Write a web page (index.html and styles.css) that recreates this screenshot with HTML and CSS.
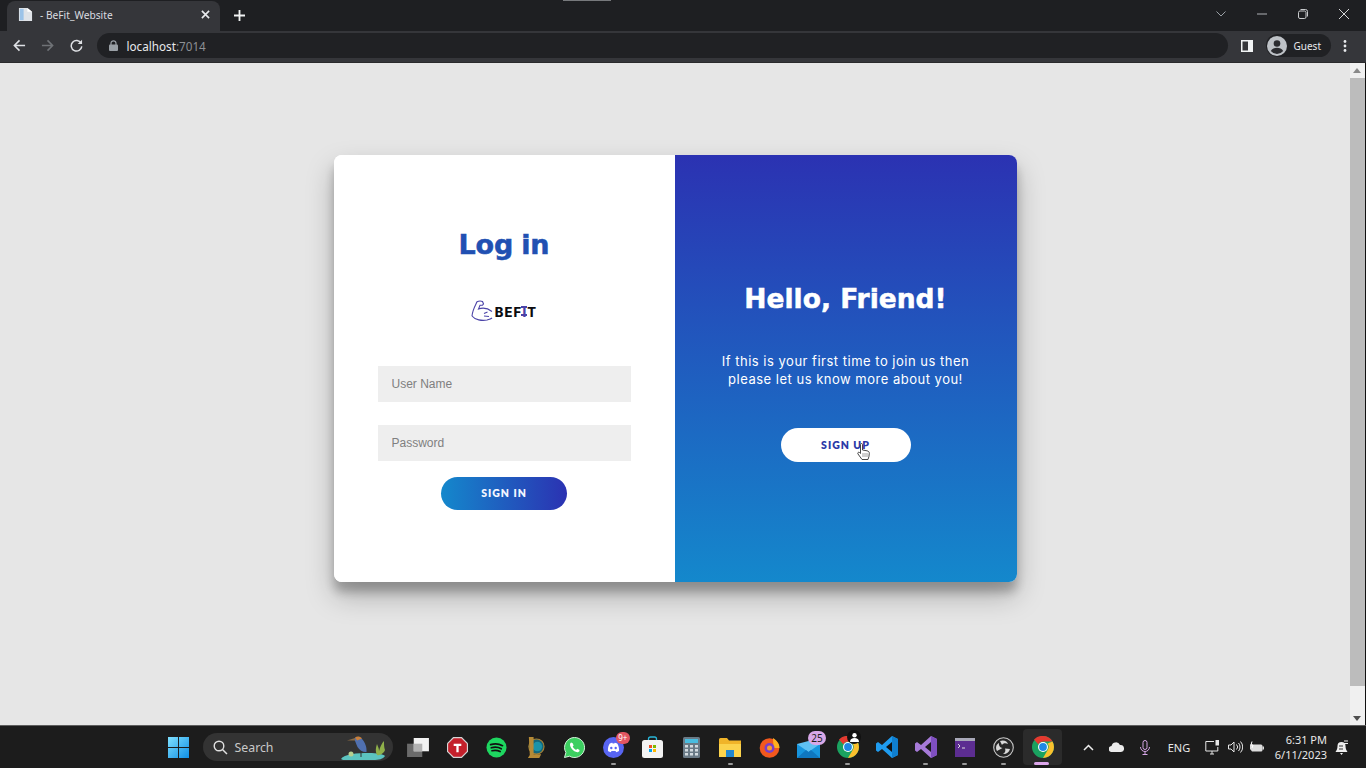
FILE: index.html
```html
<!DOCTYPE html>
<html lang="en">
<head>
<meta charset="utf-8">
<title>BeFit_Website</title>
<link rel="stylesheet" href="styles.css">
</head>
<body>
<div class="screen">
  <header class="browser">
    <div class="tabstrip">
      <span class="notch"></span>
      <div class="tab">
        <svg class="favicon" width="15" height="15" viewBox="0 0 16 16"><path d="M1 1h9l5 4v10H1z" fill="#dfe3e8"/><path d="M2 2h4v12H2z" fill="#9cc3e8"/><path d="M10 1l5 4h-5z" fill="#fff"/></svg>
        <span class="tab-title">- BeFit_Website</span>
        <svg class="tab-close" width="9" height="9" viewBox="0 0 10 10"><path d="M1 1l8 8M9 1l-8 8" stroke="#e8eaed" stroke-width="1.800"/></svg>
      </div>
      <svg class="new-tab" width="11" height="11" viewBox="0 0 12 12"><path d="M6 0v12M0 6h12" stroke="#f1f3f4" stroke-width="2"/></svg>
      <div class="window-controls">
        <svg class="win-btn" width="10" height="6" viewBox="0 0 10 6"><path d="M.5.5L5 5 9.500.5" fill="none" stroke="#9aa0a6"/></svg>
        <svg class="win-btn" width="10" height="2" viewBox="0 0 10 2"><path d="M0 1h10" stroke="#aeb1b5"/></svg>
        <svg class="win-btn" width="10" height="10" viewBox="0 0 10 10"><rect x=".5" y="2" width="7.500" height="7.500" rx="1.500" fill="none" stroke="#c8cacc"/><path d="M2.500.5h5a2 2 0 0 1 2 2v5" fill="none" stroke="#c8cacc"/></svg>
        <svg class="win-btn" width="10" height="10" viewBox="0 0 10 10"><path d="M0 0l10 10M10 0L0 10" stroke="#d5d6d8"/></svg>
      </div>
    </div>
    <div class="toolbar">
      <span class="tool"><svg width="13" height="13" viewBox="0 0 14 14"><path d="M13 7H2M7 1.500L1.500 7 7 12.500" fill="none" stroke="#dfe1e5" stroke-width="1.700"/></svg></span>
      <span class="tool"><svg width="13" height="13" viewBox="0 0 14 14"><path d="M1 7h11M7 1.500L12.500 7 7 12.500" fill="none" stroke="#6f7276" stroke-width="1.700"/></svg></span>
      <span class="tool"><svg width="13" height="13" viewBox="0 0 14 14"><path d="M12 4.500A5.700 5.700 0 1 0 12.700 8" fill="none" stroke="#dfe1e5" stroke-width="1.600"/><path d="M13 .8v4.700H8.300z" fill="#dfe1e5"/></svg></span>
      <div class="omnibox">
        <svg class="lock" width="9" height="11" viewBox="0 0 9 11"><path d="M2 5V3.300a2.500 2.500 0 0 1 5 0V5" fill="none" stroke="#9aa0a6" stroke-width="1.200"/><rect y="4.500" width="9" height="6.500" rx="1" fill="#9aa0a6"/></svg>
        <span class="url">localhost<span class="port">:7014</span></span>
      </div>
      <span class="tool tool-panel"><svg width="12" height="12" viewBox="0 0 12 12"><path d="M0 0h12v12H0z" fill="#f1f3f4"/><path d="M1.500 1.500h5.500v9H1.500z" fill="#35363a"/></svg></span>
      <div class="profile">
        <svg width="20" height="20" viewBox="0 0 20 20"><circle cx="10" cy="10" r="10" fill="#bdc1c6"/><circle cx="10" cy="7.500" r="3.300" fill="#2b2c30"/><path d="M3.800 15c1.200-2.400 3.700-3.300 6.200-3.300s5 .9 6.200 3.300a8 8 0 0 1-12.400 0z" fill="#2b2c30"/></svg>
        <span class="guest">Guest</span>
      </div>
      <span class="tool"><svg width="4" height="12" viewBox="0 0 4 12"><circle cx="2" cy="1.500" r="1.400" fill="#e8eaed"/><circle cx="2" cy="6" r="1.400" fill="#e8eaed"/><circle cx="2" cy="10.500" r="1.400" fill="#e8eaed"/></svg></span>
    </div>
  </header>

  <div class="viewport">
    <main class="page">
      <section class="card">
        <form class="panel-login">
          <h1 class="login-title">Log in</h1>
          <div class="logo">
            <svg width="23" height="22" viewBox="0 0 23 22"><path d="M1 16C1.500 10 4 6 6 1.800 7.500 1 10 .8 11.500 1.500l1 2.500-1 1.200H9L7.500 9c4-1.500 9-1 13.500 2.500" fill="none" stroke="#4b43a8" stroke-width="1.100"/><path d="M1 16c3 4 10 5 15 4 2-.5 4-1 5-2M13 13.500l3.500-1.500M13 16l5 .5" fill="none" stroke="#4b43a8" stroke-width="1.100"/></svg>
            <span class="logo-text">BEF<span class="logo-i">I</span>T</span>
          </div>
          <input class="field field-user" type="text" placeholder="User Name">
          <input class="field field-pass" type="password" placeholder="Password">
          <button class="btn btn-signin" type="button">SIGN IN</button>
        </form>
        <aside class="panel-hello">
          <h2 class="hello-title">Hello, Friend!</h2>
          <p class="hello-text">If this is your first time to join us then<br>please let us know more about you!</p>
          <button class="btn btn-signup" type="button">SIGN UP
            <svg class="cursor" width="13" height="18" viewBox="0 0 13 18"><path d="M3.500 1.500c0-1.300 2-1.300 2 0V7l4.500.8c1.500.4 2.300 1 2.300 2.500 0 2.500-.5 4-1.300 6.200H5L1 11c-.8-1 .5-2.400 1.500-1.500l1 1z" fill="#fff" stroke="#333" stroke-width=".9"/><path d="M6 10v4M8 10v4M10 10v4" stroke="#777" stroke-width=".7"/></svg>
          </button>
        </aside>
      </section>
    </main>
    <div class="scrollbar">
      <span class="arrow-up"></span>
      <span class="thumb"></span>
      <span class="arrow-down"></span>
    </div>
  </div>

  <footer class="taskbar">
    <span class="slot">
      <svg width="21" height="21" viewBox="0 0 22 22"><defs><linearGradient id="winA" x1="0" y1="0" x2="1" y2="1"><stop offset="0" stop-color="#7fe0ff"/><stop offset="1" stop-color="#0f8fe6"/></linearGradient></defs><path d="M0 0h10.500v10.500H0zM11.500 0H22v10.500H11.500zM0 11.500h10.500V22H0zM11.500 11.500H22V22H11.500z" fill="url(#winA)"/></svg>
    </span>
    <div class="search">
      <svg width="15" height="15" viewBox="0 0 15 15"><circle cx="6" cy="6" r="4.800" fill="none" stroke="#e0e0e0" stroke-width="1.400"/><path d="M9.500 9.500L14 14" stroke="#e0e0e0" stroke-width="1.500"/></svg>
      <span class="search-label">Search</span>
      <svg class="search-art" width="50" height="26" viewBox="0 0 50 26"><path d="M0 25c3-5 16-6 28-6 8 0 14 1 16 3-2 3-6 4-12 4H2z" fill="#5cc4c0"/><path d="M13 5c2-2.500 6-2.500 8 0 3 3.500 5 8 4.500 13-3 .5-7-1.500-9-5-1.500-3-2-6-3.500-8z" fill="#5070b0"/><path d="M14 3.500c2-1.500 5-1.300 7 1l-5 2z" fill="#c9803c"/><path d="M14 4L6 6.500l8 0z" fill="#8a6a45"/><path d="M20 17v6" stroke="#333"/><path d="M36 21c-2-4-1-8 0-11 1 3 2 4 2 7 1-4 3-8 5-10 0 4 0 6 1 9-1 3-5 6-8 5z" fill="#8fb04a"/><circle cx="10" cy="20" r="2.500" fill="#b6cf8f"/></svg>
    </div>
    <span class="slot">
      <svg width="22" height="19" viewBox="0 0 23 20"><rect y="6" width="16" height="14" fill="#6b6b6b"/><rect x="7" width="16" height="14" fill="#f2f2f2"/><rect x="7" y="6" width="9" height="8" fill="#b2b2b2"/></svg>
    </span>
    <span class="slot">
      <svg width="21" height="21" viewBox="0 0 22 22"><path d="M6.500 0h9L22 6.500v9L15.500 22h-9L0 15.500v-9z" fill="#d5d5d5"/><path d="M7 1.200h8L20.800 7v8L15 20.800H7L1.200 15V7z" fill="#c4202b"/><path d="M7 7h8v2.300h-2.800V16H9.800V9.300H7z" fill="#fff"/></svg>
    </span>
    <span class="slot">
      <svg width="21" height="21" viewBox="0 0 22 22"><circle cx="11" cy="11" r="10.500" fill="#1ed760"/><path d="M4.800 8c4-1.200 9-.9 12.500 1.100M5.500 11.300c3.500-1 7.500-.7 10.500 1M6.300 14.400c3-.8 6-.5 8.500.9" fill="none" stroke="#111" stroke-width="1.800" stroke-linecap="round"/></svg>
    </span>
    <span class="slot">
      <svg width="19" height="23" viewBox="0 0 20 24"><circle cx="11" cy="11" r="8" fill="#15667a" stroke="#a98335" stroke-width="1.200"/><circle cx="12" cy="11" r="5" fill="#1a93a8"/><path d="M3 1h5v18h8l-2 4H2l2-3z" fill="#b58a36"/></svg>
    </span>
    <span class="slot">
      <svg width="21" height="21" viewBox="0 0 22 22"><path d="M11 .5A10.500 10.500 0 0 0 2 16.300L.5 21.500l5.300-1.400A10.500 10.500 0 1 0 11 .5z" fill="#3ccf60" stroke="#d9f7df"/><path d="M7.500 5.800c-1 .6-1.500 2-1 3.500 1 3 3.500 5.500 6.500 6.500 1.500.4 3-.3 3.300-1.500l-.3-1-2.300-1-1 1.200c-1.500-.6-3-2-3.600-3.500l1-1.200-1-2.300z" fill="#fff"/></svg>
    </span>
    <span class="slot running">
      <svg width="21" height="21" viewBox="0 0 21 21"><circle cx="10.500" cy="10.500" r="10.500" fill="#5865f2"/><path d="M5 14c-.3-3 .5-5.600 1.800-7.500 1-.4 2-.7 2.500-.7l.4.8h1.600l.4-.8c.6 0 1.600.3 2.500.7 1.300 2 2.100 4.500 1.800 7.500-1 .8-2 1.100-2.800 1.200l-.7-1.200H8.500l-.7 1.200C7 15.100 6 14.800 5 14z" fill="#fff"/><circle cx="8.300" cy="11" r="1.200" fill="#5865f2"/><circle cx="12.700" cy="11" r="1.200" fill="#5865f2"/></svg>
      <span class="badge badge-red">9+</span>
    </span>
    <span class="slot">
      <svg width="21" height="22" viewBox="0 0 21 22"><path d="M6.500 5V3a2 2 0 0 1 2-2h4a2 2 0 0 1 2 2v2" fill="none" stroke="#29b6d8" stroke-width="1.300"/><rect y="4" width="21" height="18" rx="2.500" fill="#f3f3f3"/><path d="M7 9h3v3H7z" fill="#f25022"/><path d="M11 9h3v3h-3z" fill="#7fba00"/><path d="M7 13h3v3H7z" fill="#00a4ef"/><path d="M11 13h3v3h-3z" fill="#ffb900"/></svg>
    </span>
    <span class="slot">
      <svg width="17" height="21" viewBox="0 0 17 21"><rect width="17" height="21" rx="1.500" fill="#6a7a86"/><rect x="2" y="2" width="13" height="4" fill="#49bde0"/><path d="M2 8h3v2.500H2zM7 8h3v2.500H7zM12 8h3v2.500h-3zM2 12h3v2.500H2zM7 12h3v2.500H7zM12 12h3v2.500h-3zM2 16h3v2.500H2zM7 16h3v2.500H7zM12 16h3v2.500h-3z" fill="#d3dbe0"/></svg>
    </span>
    <span class="slot running">
      <svg width="22" height="19" viewBox="0 0 22 19"><path d="M0 1.500A1.500 1.500 0 0 1 1.500 0H8l2 2.500h12V19H0z" fill="#f0b429"/><path d="M0 6h22v13H0z" fill="#fbd34d"/><path d="M7 12h8v7H7z" fill="#1f86d0"/></svg>
    </span>
    <span class="slot">
      <svg width="21" height="21" viewBox="0 0 21 21"><circle cx="10.500" cy="11" r="9.800" fill="#f2581e"/><path d="M14 1c4 2.500 6.500 6 6.500 10h-6z" fill="#ffb01f"/><circle cx="10.500" cy="11" r="5" fill="#7a3ec9"/><circle cx="10.500" cy="11" r="2.500" fill="#f99b2b"/></svg>
    </span>
    <span class="slot">
      <svg width="23" height="21" viewBox="0 0 23 21"><path d="M0 7h23v14H0z" fill="#1795de"/><path d="M0 7l11.500 8L23 7l-11.500-3z" fill="#5fc1f3"/><path d="M0 21l9-8 2.500 2 2.500-2 9 8z" fill="#0f77c0"/></svg>
      <span class="badge badge-mail">25</span>
    </span>
    <span class="slot running">
      <svg width="22" height="22" viewBox="0 0 22 22"><use href="#chromeIcon"/></svg>
      <span class="badge badge-user"><svg width="9" height="9" viewBox="0 0 9 9"><circle cx="4.500" cy="2.300" r="2.200" fill="#fff"/><path d="M0 9c0-3 2-4 4.500-4S9 6 9 9z" fill="#fff"/></svg></span>
    </span>
    <span class="slot">
      <svg width="22" height="22" viewBox="0 0 22 22"><path d="M16 0l6 3v16l-6 3L6 13l-4 3-2-1.500V7.500L2 6l4 3z" fill="#1f9cf0"/><path d="M16 6l-6 5 6 5z" fill="#111"/><path d="M16 0l6 3v16l-6 3z" fill="#0f7fd0"/></svg>
    </span>
    <span class="slot running">
      <svg width="22" height="22" viewBox="0 0 22 22"><path d="M16 0l6 3v16l-6 3L6 13l-4 3-2-1.500V7.500L2 6l4 3z" fill="#a67ad8"/><path d="M16 6l-6 5 6 5z" fill="#1b1b1b"/><path d="M16 0l6 3v16l-6 3z" fill="#7f4fc0"/></svg>
    </span>
    <span class="slot running">
      <svg width="20" height="19" viewBox="0 0 20 19"><rect width="20" height="19" fill="#5c2d91"/><rect width="20" height="3" fill="#a8a8b8"/><path d="M3 6l2 2-2 2M7 10h3" fill="none" stroke="#ddd"/></svg>
    </span>
    <span class="slot running">
      <svg width="21" height="21" viewBox="0 0 21 21"><circle cx="10.500" cy="10.500" r="9.800" fill="#262626" stroke="#c8c8c8" stroke-width="1.100"/><path d="M7 4c4-1.500 7.500.5 8 3-2-1-5-1-6 1zM17 12c-1 4-4.500 5.500-7 5 2-1 3-3.500 2-5.500zM4 14C2 10.500 3.500 7 6 6c-.5 2.300 1 4.800 3.500 5z" fill="#d8d8d8"/></svg>
    </span>
    <span class="slot slot-active">
      <svg width="22" height="22" viewBox="0 0 22 22"><g id="chromeIcon"><circle cx="11" cy="11" r="11" fill="#1aa260"/><path d="M11 0a11 11 0 0 1 9.500 5.500H11a5.500 5.500 0 0 0-4.800 2.800L2 3.500A11 11 0 0 1 11 0z" fill="#e5392f"/><path d="M20.500 5.500A11 11 0 0 1 11 22l4.800-8.300A5.500 5.500 0 0 0 15.500 7.500z" fill="#fbc02d"/><circle cx="11" cy="11" r="5" fill="#fff"/><circle cx="11" cy="11" r="3.900" fill="#1e88e5"/></g></svg>
    </span>

    <div class="tray">
      <span class="tray-item tray-chevron"><svg width="11" height="7" viewBox="0 0 11 7"><path d="M1 6l4.500-4.500L10 6" fill="none" stroke="#eee" stroke-width="1.500"/></svg></span>
      <span class="tray-item tray-cloud"><svg width="15" height="10" viewBox="0 0 15 10"><path d="M3 10a3 3 0 0 1-.5-6A4.500 4.500 0 0 1 11 3a3.500 3.500 0 0 1 1 7z" fill="#ececec"/></svg></span>
      <span class="tray-item tray-mic"><svg width="10" height="15" viewBox="0 0 10 15"><rect x="3" y=".5" width="4" height="9" rx="2" fill="none" stroke="#d6a6e6"/><path d="M.5 7a4.500 4.500 0 0 0 9 0M5 11.500V14.500M2.500 14.500h5" fill="none" stroke="#d6a6e6"/></svg></span>
      <span class="tray-item tray-lang">ENG</span>
      <span class="tray-item tray-net"><svg width="15" height="15" viewBox="0 0 15 15"><path d="M9 1.500H.8v9.500h12V7M5 14h4M7 11v3" fill="none" stroke="#e6e6e6"/><rect x="10.500" y="0" width="3.500" height="5.500" fill="#e6e6e6"/></svg></span>
      <span class="tray-item tray-vol"><svg width="15" height="12" viewBox="0 0 15 12"><path d="M.5 4h2.500l3-3v10l-3-3H.5zM8.500 3.500a3.500 3.500 0 0 1 0 5M10.500 2a6 6 0 0 1 0 8M12.500.5a8 8 0 0 1 0 11" fill="none" stroke="#e6e6e6"/></svg></span>
      <span class="tray-item tray-bat"><svg width="15" height="12" viewBox="0 0 15 12"><path d="M1 3.500h11a1.500 1.500 0 0 1 1.500 1.500v4a1.500 1.500 0 0 1-1.500 1.500H3L1 8z" fill="#ddd"/><rect x="13.500" y="5.500" width="1.500" height="3" fill="#ddd"/><path d="M3 .5L2 4h2L3 7" fill="none" stroke="#fff"/></svg></span>
      <div class="clock"><span>6:31 PM</span><span>6/11/2023</span></div>
      <span class="tray-item tray-bell"><svg width="13" height="15" viewBox="0 0 13 15"><path d="M6.500 2a4 4 0 0 1 4 4c0 3 1 4.500 2 6H.5c1-1.500 2-3 2-6a4 4 0 0 1 4-4z" fill="#eee"/><path d="M5 13h3l-1.500 2z" fill="#eee"/><path d="M4 6h4M4 9h4M9 0h3.500M9 3h3.500" stroke="#333"/><path d="M9 1h4M9 3.500h4" stroke="#eee"/></svg></span>
    </div>
  </footer>
</div>
</body>
</html>
```
FILE: styles.css
```css
* { box-sizing: border-box; }
html, body { margin: 0; height: 100%; overflow: hidden; }
body { font-family: "Noto Sans", "Liberation Sans", sans-serif; background: #e6e6e6; }
.screen { display: flex; flex-direction: column; width: 1366px; height: 768px; }

/* browser chrome */
.browser { flex: none; height: 63px; background: #202124; border-bottom: 1px solid #2a2a2c; }
.tabstrip { position: relative; display: flex; align-items: flex-start; height: 31px; padding-left: 7px; background: #1e1f22; }
.notch { position: absolute; left: 563px; top: 0; width: 48px; height: 1px; background: #77797c; }
.tab { display: flex; align-items: center; width: 213px; height: 30px; margin-top: 1px; padding: 0 10px 3px 11px; background: #35363a; border-radius: 8px 8px 0 0; }
.favicon { flex: none; }
.tab-title { flex: 1; margin-left: 7px; font-size: 10.200px; color: #dadce0; }
.tab-close { flex: none; }
.new-tab { flex: none; margin: 10px 0 0 14px; }
.window-controls { display: flex; align-items: center; height: 28px; margin-left: auto; padding-right: 17px; }
.win-btn { flex: none; margin-left: 31px; }

.toolbar { display: flex; align-items: center; height: 31px; padding: 0 7px 2px 5px; background: #35363a; }
.tool { display: flex; flex: none; align-items: center; justify-content: center; width: 28.500px; height: 28px; }
.omnibox { display: flex; flex: 1; align-items: center; height: 25px; margin-left: 6px; padding-left: 12px; background: #202124; border-radius: 13px; }
.lock { flex: none; }
.url { margin-left: 9px; font-size: 11.700px; color: #e8eaed; }
.port { color: #8d9094; }
.tool-panel { margin-left: 5px; }
.profile { display: flex; flex: none; align-items: center; width: 65px; height: 23px; margin-left: 4px; padding-left: 1px; background: #202124; border-radius: 12px; }
.guest { margin-left: 7px; font-size: 10px; color: #e8eaed; }

/* page */
.viewport { display: flex; flex: 1; min-height: 0; }
.page { flex: 1; padding-top: 92px; background: #e6e6e6; }
.card { display: flex; width: 683px; height: 427px; margin: 0 auto; background: #fff; border-radius: 8px; overflow: hidden; box-shadow: 0 14px 28px rgba(0,0,0,.25), 0 10px 10px rgba(0,0,0,.22); }
.panel-login { display: flex; flex-direction: column; align-items: center; width: 341px; padding-top: 70px; background: #fff; }
.login-title { margin: 0; font: 700 27px/40px "DejaVu Sans", Inter, sans-serif; letter-spacing: -.2px; word-spacing: -1px; color: #2150b2; -webkit-text-stroke: .5px #2150b2; }
.logo { display: flex; align-items: center; height: 24px; margin-top: 34px; }
.logo-text { position: relative; top: 1px; margin-left: 1px; font: 800 13px/14px Inter, sans-serif; letter-spacing: 1.200px; color: #0c0c10; }
.logo-i { position: relative; color: #4b43a8; }
.logo-i::before, .logo-i::after { content: ""; position: absolute; left: -1px; width: 6px; height: 2px; background: #4b43a8; }
.logo-i::before { top: 2px; }
.logo-i::after { top: 10px; }
.field { display: block; width: 253px; height: 36px; padding: 0 14px; border: 0; outline: 0; background: #eee; font: 12px "Liberation Sans", sans-serif; color: #333; }
.field::placeholder { color: #7f7f7f; opacity: 1; }
.field-user { margin-top: 43px; }
.field-pass { margin-top: 23px; }
.btn { display: block; border: 0; border-radius: 20px; font: 800 10.500px/14px Lato, Inter, sans-serif; letter-spacing: 1px; padding: 0 0 1px; text-align: center; }
.btn-signin { width: 126px; height: 33px; margin-top: 16px; color: #f2f6ff; background: linear-gradient(to right, #1488cc, #2b32b2); }

.panel-hello { display: flex; flex: 1; flex-direction: column; align-items: center; padding-top: 124px; background: linear-gradient(to bottom, #2b32b2, #1488cc); color: #fff; }
.hello-title { margin: 0; font: 700 26.500px/40px "DejaVu Sans", Inter, sans-serif; -webkit-text-stroke: .5px #fff; }
.hello-text { margin: 33px 0 0; font: 400 13px/18px Inter, sans-serif; letter-spacing: .5px; text-align: center; color: #fff; }
.btn-signup { position: relative; width: 130px; height: 34px; margin-top: 40px; background: #fff; color: #2c3aa8; }
.cursor { position: absolute; left: 76px; top: 15px; }

.scrollbar { display: flex; flex: none; flex-direction: column; align-items: center; width: 16px; padding-right: 1px; background: #f0f0f0; border-right: 1px solid #111; }
.arrow-up { flex: none; width: 0; height: 0; margin: 5px 0 5px; border: 4px solid transparent; border-top: 0; border-bottom: 5px solid #8a8a8a; }
.thumb { flex: none; width: 15px; height: 608px; background: #bcbcbc; }
.arrow-down { flex: none; width: 0; height: 0; margin: auto 0 4px; border: 4px solid transparent; border-bottom: 0; border-top: 5px solid #505050; }

/* taskbar */
.taskbar { display: flex; flex: none; align-items: center; height: 43px; padding-left: 158.500px; background: #1c1c1c; border-top: 1px solid #5e5e5e; color: #f0f0f0; }
.slot { position: relative; display: flex; flex: none; align-items: center; justify-content: center; width: 39.060px; height: 36px; }
.running::after { content: ""; position: absolute; left: 17px; bottom: 0; width: 5px; height: 2px; background: #9a9a9a; border-radius: 1px; }
.slot-active { background: #2b2b2b; border-radius: 4px; }
.slot-active::after { content: ""; position: absolute; left: 11px; bottom: 0; width: 15px; height: 3px; background: #dca6ea; border-radius: 2px; }
.search { position: relative; display: flex; flex: none; align-items: center; width: 190px; height: 28px; margin: 0 6px 0 5px; padding: 0 0 0 10px; background: #333; border-radius: 14px; }
.search-label { margin-left: 7px; font-size: 12.300px; color: #c9c9c9; }
.search-art { margin-left: auto; margin-right: 2px; }
.badge { position: absolute; display: flex; align-items: center; justify-content: center; font-size: 9px; border-radius: 8px; line-height: 1; }
.badge-red { left: 22px; top: 3px; width: 14px; height: 12px; background: #e25561; color: #fff; font-size: 8px; }
.badge-mail { left: 19px; top: 2px; width: 18px; height: 14px; background: #d8a8e8; color: #222; font-size: 10px; }
.badge-user { left: 19px; top: 1px; width: 14px; height: 14px; background: #111; border-radius: 50%; }

.tray { display: flex; align-items: center; margin-left: auto; padding-right: 11px; }
.tray-item { display: flex; flex: none; align-items: center; justify-content: center; height: 30px; }
.tray-chevron { width: 28px; }
.tray-cloud { width: 29px; }
.tray-mic { width: 28px; }
.tray-lang { width: 40px; font-size: 11px; color: #e8e8e8; }
.tray-net { width: 26px; }
.tray-vol { width: 20px; }
.tray-bat { width: 22px; }
.clock { display: flex; flex: none; flex-direction: column; align-items: flex-end; width: 60px; font-size: 11px; line-height: 15px; color: #e8e8e8; }
.tray-bell { width: 28px; }
```
